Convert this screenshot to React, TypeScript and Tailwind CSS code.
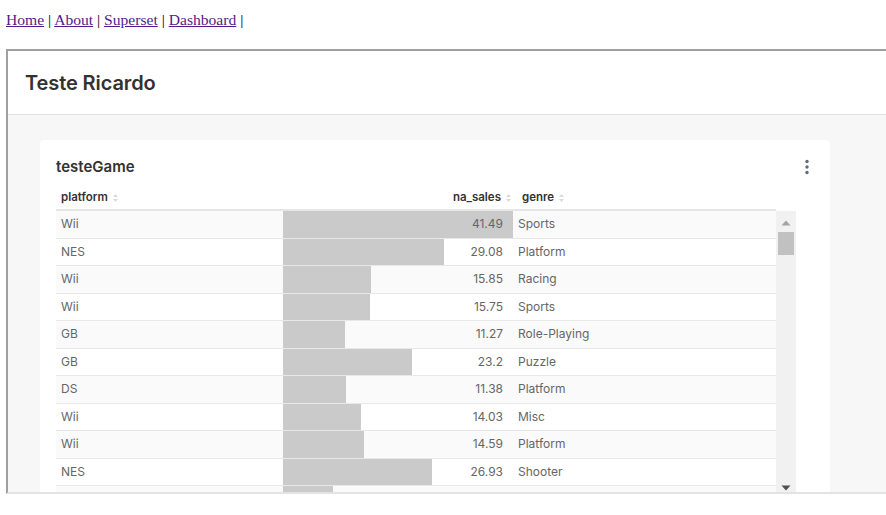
import React from "react";

const rows: [string, number, string][] = [
  ["Wii", 41.49, "Sports"],
  ["NES", 29.08, "Platform"],
  ["Wii", 15.85, "Racing"],
  ["Wii", 15.75, "Sports"],
  ["GB", 11.27, "Role-Playing"],
  ["GB", 23.2, "Puzzle"],
  ["DS", 11.38, "Platform"],
  ["Wii", 14.03, "Misc"],
  ["Wii", 14.59, "Platform"],
  ["NES", 26.93, "Shooter"],
  ["", 9.07, ""],
];

const MAX = 41.49;

function SortIcon() {
  return (
    <svg width="7" height="10" viewBox="0 0 7 10" className="ml-[4px] inline-block">
      <path d="M3.5 1 L6 4 L1 4 Z" fill="#dadada" />
      <path d="M3.5 9 L6 6 L1 6 Z" fill="#dadada" />
    </svg>
  );
}

export default function App() {
  return (
    <div className="w-[886px] h-[515px] bg-white overflow-hidden relative" style={{ fontFamily: "Inter, 'Noto Sans', sans-serif" }}>
      <div className="pl-[6px] pt-[10px] h-[49px] text-[15.6px] leading-[20px] text-black" style={{ fontFamily: "'Liberation Serif', serif" }}>
        <a href="#" className="underline text-[#551a8b]">Home</a>
        <span> | </span>
        <a href="#" className="underline text-[#551a8b]">About</a>
        <span> | </span>
        <a href="#" className="underline text-[#551a8b]">Superset</a>
        <span> | </span>
        <a href="#" className="underline text-[#551a8b]">Dashboard</a>
        <span> |</span>
      </div>
      <div className="ml-[6px] w-[884px] h-[445px] border-2 border-t-[#a0a0a0] border-l-[#a0a0a0] border-r-[#e3e3e3] border-b-[#e3e3e3] overflow-hidden flex flex-col">
        <div className="h-[64px] shrink-0 bg-white border-b border-[#e0e0e0] flex items-center pl-[17px]">
          <span className="text-[20px] font-semibold text-[#323232] tracking-[-0.1px]">Teste Ricardo</span>
        </div>
        <div className="flex-1 bg-[#f7f7f7] pl-[32px] pt-[25px]">
          <div className="w-[790px] h-[400px] bg-white rounded-[4px] pl-[16px] pt-[17px]">
            <div className="flex items-center justify-between w-[758px] h-[20px]">
              <span className="text-[15px] font-semibold text-[#323232]">testeGame</span>
              <svg width="6" height="16" viewBox="0 0 6 16" className="mr-[4px]">
                <circle cx="3" cy="2.5" r="1.7" fill="#5f6b77" />
                <circle cx="3" cy="8" r="1.7" fill="#5f6b77" />
                <circle cx="3" cy="13.5" r="1.7" fill="#5f6b77" />
              </svg>
            </div>
            <div className="w-[740px] mt-[10px]">
              <div className="flex h-[24px] w-[720px] border-b-2 border-[#e6e6e6] text-[11.5px] font-semibold text-[#333]">
                <div className="w-[227px] pl-[5px] flex items-center">platform<SortIcon /></div>
                <div className="w-[230px] pr-[1px] flex items-center justify-end">na_sales<SortIcon /></div>
                <div className="w-[263px] pl-[9px] flex items-center">genre<SortIcon /></div>
              </div>
              <div className="flex h-[282px] overflow-hidden">
                <div className="w-[720px]">
                  {rows.map(([p, v, g], i) => (
                    <div key={i} className={`flex h-[27.5px] border-b border-[#e8e8e8] text-[12px] text-[#666] ${i % 2 === 0 ? "bg-[#fafafa]" : "bg-white"}`}>
                      <div className="w-[227px] pl-[5px] flex items-center">{p}</div>
                      <div className="w-[230px] relative flex items-center justify-end pr-[10px]">
                        <div className="absolute left-0 top-0 bottom-0 bg-[#cacaca]" style={{ width: `${(v / MAX) * 230}px` }} />
                        {p && <span className="relative">{v}</span>}
                      </div>
                      <div className="w-[263px] pl-[5px] flex items-center">{g}</div>
                    </div>
                  ))}
                </div>
                <div className="w-[20px] h-[282px] bg-[#f1f1f1] flex flex-col items-center">
                  <svg width="10" height="6" viewBox="0 0 10 6" className="mt-[9px]">
                    <path d="M5 0.5 L9.5 5.5 L0.5 5.5 Z" fill="#a3a3a3" />
                  </svg>
                  <div className="mt-[6px] w-[16px] h-[23px] bg-[#c1c1c1]" />
                  <div className="flex-1" />
                  <svg width="10" height="6" viewBox="0 0 10 6" className="mb-[2px]">
                    <path d="M0.5 0.5 L9.5 0.5 L5 5.5 Z" fill="#505050" />
                  </svg>
                </div>
              </div>
            </div>
          </div>
        </div>
      </div>
    </div>
  );
}
